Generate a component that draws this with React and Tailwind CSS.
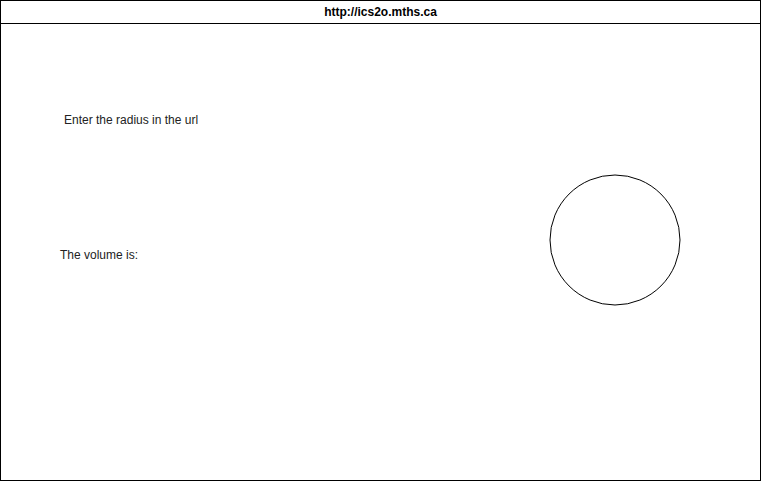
import React from 'react';

export default function App() {
  return (
    <div className="w-[761px] h-[481px] bg-white" style={{ fontFamily: '"Liberation Sans", Arial, sans-serif' }}>
      <div className="w-full h-full border border-black flex flex-col">
        <div className="h-[23px] border-b border-black flex items-center justify-center text-[12px] font-bold text-black">
          http://ics2o.mths.ca
        </div>
        <div className="flex-1 flex">
          <div className="w-[548px] flex flex-col text-[12px] leading-[14px] text-[#222]">
            <p className="mt-[89px] pl-[63px]">Enter the radius in the url</p>
            <p className="mt-[121px] pl-[59px]">The volume is:</p>
          </div>
          <div className="pt-[150px]">
            <svg width="132" height="132" viewBox="0 0 132 132">
              <circle cx="66" cy="66" r="65" fill="white" stroke="black" strokeWidth="1" />
            </svg>
          </div>
        </div>
      </div>
    </div>
  );
}
